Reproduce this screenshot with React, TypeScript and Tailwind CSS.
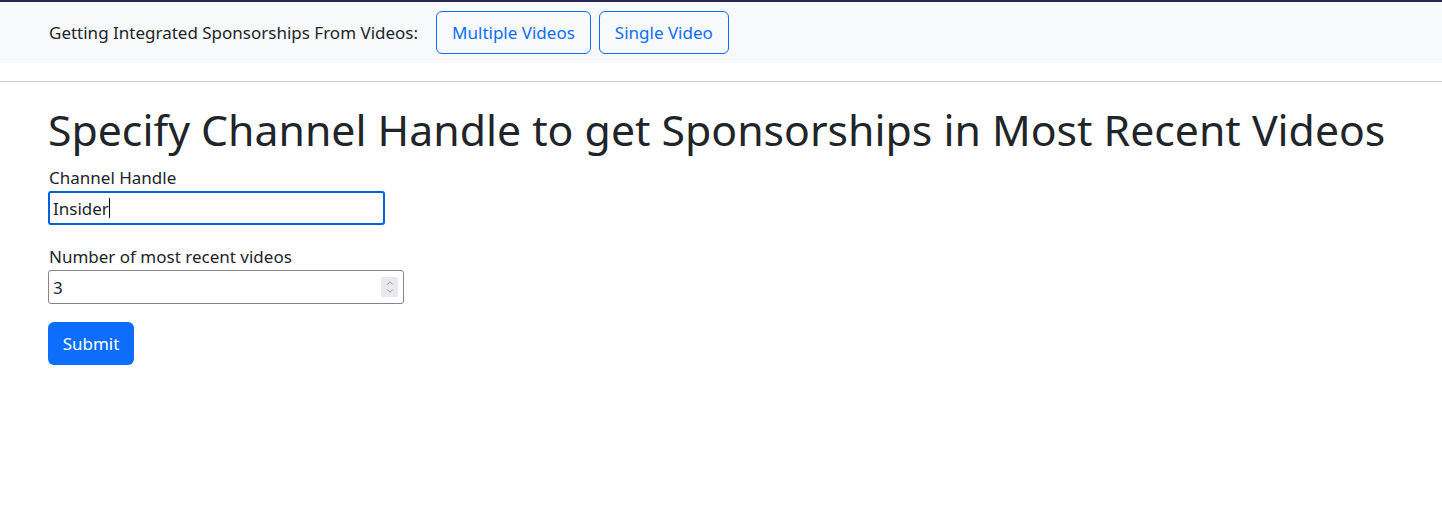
import { ChevronUp, ChevronDown } from "lucide-react"

export default function App() {
  return (
    <div className="min-h-[521px] bg-white font-['Noto_Sans',sans-serif] text-[17px] text-[#212529]">
      <div className="h-[2px] bg-[#2b2350]" />
      <nav className="flex h-[61px] items-center bg-[#f8f9fa] pl-[49px]">
        <span className="mr-[18px] whitespace-nowrap">Getting Integrated Sponsorships From Videos:</span>
        <button className="h-[43px] rounded-[6px] border border-[#0d6efd] px-[15px] text-[#0d6efd]">Multiple Videos</button>
        <button className="ml-[8px] h-[43px] rounded-[6px] border border-[#0d6efd] px-[15px] text-[#0d6efd]">Single Video</button>
      </nav>
      <hr className="mt-[18px] border-t border-[#cdcdcd]" />
      <main className="px-[48px] pt-[22px]">
        <h1 className="whitespace-nowrap text-[42.75px] leading-[1.2]">Specify Channel Handle to get Sponsorships in Most Recent Videos</h1>
        <form className="mt-[13px] flex flex-col items-start">
          <label className="pl-px leading-[20px]">Channel Handle</label>
          <div className="mt-[3px] flex h-[34px] w-[337px] items-center rounded-[3px] border-2 border-[#0060df] px-[3px]">
            <span>Insider</span>
            <span className="h-[20px] w-px bg-black" />
          </div>
          <label className="mt-[22px] pl-px leading-[20px]">Number of most recent videos</label>
          <div className="mt-[3px] flex h-[34px] w-[356px] items-center justify-between rounded-[3px] border border-[#858585] pl-[4px] pr-[5px]">
            <span>3</span>
            <span className="flex h-[20px] w-[17px] flex-col items-center justify-center bg-[#e9e9ed] text-[#8a8a8a]">
              <ChevronUp size={10} strokeWidth={2} className="-mb-[1px]" />
              <ChevronDown size={10} strokeWidth={2} className="-mt-[1px]" />
            </span>
          </div>
          <button type="button" className="mt-[18px] h-[43px] w-[86px] rounded-[6px] bg-[#0d6efd] text-white">Submit</button>
        </form>
      </main>
    </div>
  )
}
